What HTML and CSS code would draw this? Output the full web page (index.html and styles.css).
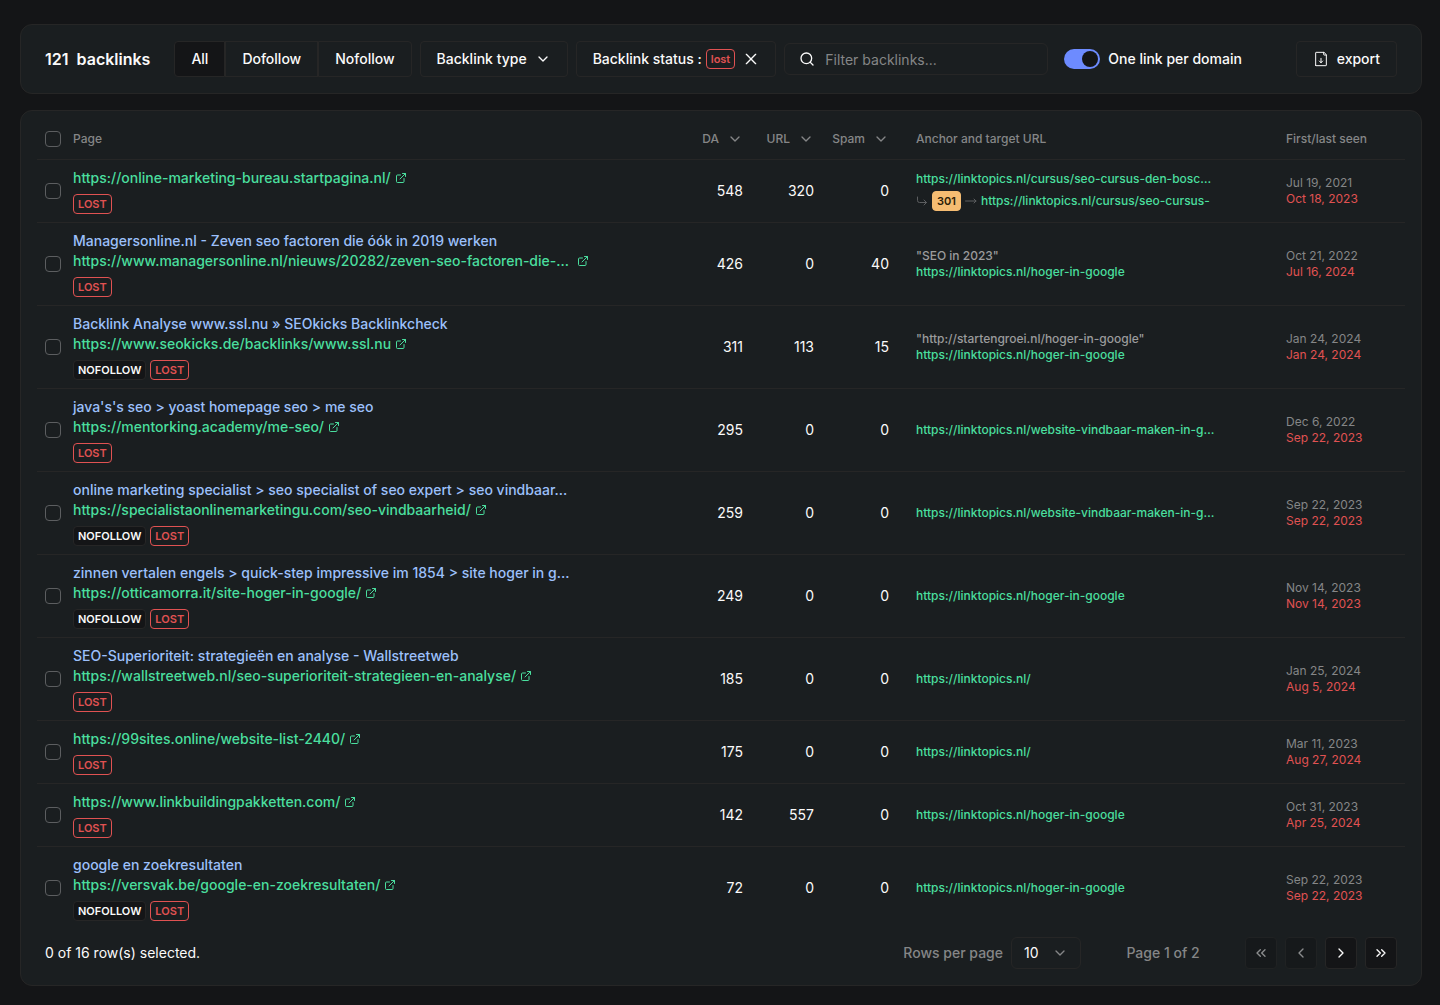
FILE: index.html
```html
<!DOCTYPE html>
<html lang="en">
<head>
  <meta charset="UTF-8">
  <meta name="viewport" content="width=device-width, initial-scale=1.0">
  <title>Backlinks</title>
  <link rel="stylesheet" href="styles.css">
</head>
<body>
  <!-- Icons -->
  <svg class="sprite" aria-hidden="true">
    <symbol id="chevron-down" viewBox="0 0 24 24"><path d="m6 9 6 6 6-6"/></symbol>
    <symbol id="close" viewBox="0 0 24 24"><path d="M19 5 5 19M5 5l14 14"/></symbol>
    <symbol id="search" viewBox="0 0 24 24"><circle cx="11" cy="11" r="8"/><path d="m21 21-4.300-4.300"/></symbol>
    <symbol id="file-down" viewBox="0 0 24 24"><path d="M4 21.400V2.600a.6.6 0 0 1 .6-.6h11.650a.6.6 0 0 1 .42.18l3.150 3.140a.6.6 0 0 1 .18.43V21.400a.6.6 0 0 1-.6.6H4.600a.6.6 0 0 1-.6-.6Z"/><path d="M16 2v3.400a.6.6 0 0 0 .6.6H20M12 11v6.500m0 0 2.500-2.500m-2.500 2.500-2.500-2.500"/></symbol>
    <symbol id="external" viewBox="0 0 24 24"><path d="M15 3h6v6M10 14 21 3"/><path d="M18 13v6a2 2 0 0 1-2 2H5a2 2 0 0 1-2-2V8a2 2 0 0 1 2-2h6"/></symbol>
    <symbol id="corner" viewBox="0 0 24 24"><path d="m16 10 5 5-5 5"/><path d="M3 4v7a4 4 0 0 0 4 4h14"/></symbol>
    <symbol id="arrow-right" viewBox="0 0 24 24"><path d="m18 8 4 4-4 4M1 12h21"/></symbol>
    <symbol id="chevron-left" viewBox="0 0 24 24"><path d="m15 6-6 6 6 6"/></symbol>
    <symbol id="chevron-right" viewBox="0 0 24 24"><path d="m9 6 6 6-6 6"/></symbol>
    <symbol id="chevrons-left" viewBox="0 0 24 24"><path d="m11 17-5-5 5-5M18 17l-5-5 5-5"/></symbol>
    <symbol id="chevrons-right" viewBox="0 0 24 24"><path d="m6 17 5-5-5-5M13 17l5-5-5-5"/></symbol>
  </svg>

  <header class="card toolbar">
    <h1>121&nbsp; backlinks</h1>
    <div class="toolbar-filters">
      <div class="btn-group">
        <button type="button" class="btn active">All</button>
        <button type="button" class="btn">Dofollow</button>
        <button type="button" class="btn">Nofollow</button>
      </div>
      <button type="button" class="btn">Backlink type <svg class="icon"><use href="#chevron-down"/></svg></button>
      <button type="button" class="btn"><span class="status">Backlink status : <span class="badge lost">lost</span></span> <svg class="icon"><use href="#close"/></svg></button>
      <div class="search">
        <svg class="icon"><use href="#search"/></svg>
        <input type="text" placeholder="Filter backlinks..." aria-label="Filter backlinks">
      </div>
    </div>
    <label class="switch"><input type="checkbox" checked> One link per domain</label>
    <button type="button" class="btn export"><svg class="icon"><use href="#file-down"/></svg> export</button>
  </header>

  <main class="card panel">
    <table>
      <colgroup>
        <col class="col-check">
        <col>
        <col class="col-num">
        <col class="col-num">
        <col class="col-spam">
        <col class="col-anchor">
        <col class="col-seen">
      </colgroup>
      <thead>
        <tr>
          <th><input type="checkbox" class="check" aria-label="Select all"></th>
          <th>Page</th>
          <th class="num"><button type="button" class="sort">DA <svg class="icon"><use href="#chevron-down"/></svg></button></th>
          <th class="num"><button type="button" class="sort">URL <svg class="icon"><use href="#chevron-down"/></svg></button></th>
          <th class="num"><button type="button" class="sort">Spam <svg class="icon"><use href="#chevron-down"/></svg></button></th>
          <th class="anchor">Anchor and target URL</th>
          <th>First/last seen</th>
        </tr>
      </thead>
      <tbody>
        <tr>
          <td><input type="checkbox" class="check" aria-label="Select row"></td>
          <td>
            <a href="#" class="url"><span>https://online-marketing-bureau.startpagina.nl/</span><svg class="icon-sm"><use href="#external"/></svg></a>
            <div class="badges"><span class="badge lost">LOST</span></div>
          </td>
          <td class="num">548</td>
          <td class="num">320</td>
          <td class="num">0</td>
          <td class="anchor">
            <a href="#" class="target">https://linktopics.nl/cursus/seo-cursus-den-bosc…</a>
            <div class="redirect">
              <svg class="icon-sm"><use href="#corner"/></svg>
              <span class="badge code">301</span>
              <svg class="icon-sm"><use href="#arrow-right"/></svg>
              <a href="#" class="target">https://linktopics.nl/cursus/seo-cursus-</a>
            </div>
          </td>
          <td class="seen">Jul 19, 2021<span class="last">Oct 18, 2023</span></td>
        </tr>
        <tr>
          <td><input type="checkbox" class="check" aria-label="Select row"></td>
          <td>
            <div class="title">Managersonline.nl - Zeven seo factoren die óók in 2019 werken</div>
            <a href="#" class="url cut"><span>https://www.managersonline.nl/nieuws/20282/zeven-seo-factoren-die-…</span><svg class="icon-sm"><use href="#external"/></svg></a>
            <div class="badges"><span class="badge lost">LOST</span></div>
          </td>
          <td class="num">426</td>
          <td class="num">0</td>
          <td class="num">40</td>
          <td class="anchor">
            <div class="anchor-text">"SEO in 2023"</div>
            <a href="#" class="target">https://linktopics.nl/hoger-in-google</a>
          </td>
          <td class="seen">Oct 21, 2022<span class="last">Jul 16, 2024</span></td>
        </tr>
        <tr>
          <td><input type="checkbox" class="check" aria-label="Select row"></td>
          <td>
            <div class="title">Backlink Analyse www.ssl.nu » SEOkicks Backlinkcheck</div>
            <a href="#" class="url"><span>https://www.seokicks.de/backlinks/www.ssl.nu</span><svg class="icon-sm"><use href="#external"/></svg></a>
            <div class="badges"><span class="badge">NOFOLLOW</span><span class="badge lost">LOST</span></div>
          </td>
          <td class="num">311</td>
          <td class="num">113</td>
          <td class="num">15</td>
          <td class="anchor">
            <div class="anchor-text">"http://startengroei.nl/hoger-in-google"</div>
            <a href="#" class="target">https://linktopics.nl/hoger-in-google</a>
          </td>
          <td class="seen">Jan 24, 2024<span class="last">Jan 24, 2024</span></td>
        </tr>
        <tr>
          <td><input type="checkbox" class="check" aria-label="Select row"></td>
          <td>
            <div class="title">java's's seo &gt; yoast homepage seo &gt; me seo</div>
            <a href="#" class="url"><span>https://mentorking.academy/me-seo/</span><svg class="icon-sm"><use href="#external"/></svg></a>
            <div class="badges"><span class="badge lost">LOST</span></div>
          </td>
          <td class="num">295</td>
          <td class="num">0</td>
          <td class="num">0</td>
          <td class="anchor"><a href="#" class="target">https://linktopics.nl/website-vindbaar-maken-in-g…</a></td>
          <td class="seen">Dec 6, 2022<span class="last">Sep 22, 2023</span></td>
        </tr>
        <tr>
          <td><input type="checkbox" class="check" aria-label="Select row"></td>
          <td>
            <div class="title">online marketing specialist &gt; seo specialist of seo expert &gt; seo vindbaar…</div>
            <a href="#" class="url"><span>https://specialistaonlinemarketingu.com/seo-vindbaarheid/</span><svg class="icon-sm"><use href="#external"/></svg></a>
            <div class="badges"><span class="badge">NOFOLLOW</span><span class="badge lost">LOST</span></div>
          </td>
          <td class="num">259</td>
          <td class="num">0</td>
          <td class="num">0</td>
          <td class="anchor"><a href="#" class="target">https://linktopics.nl/website-vindbaar-maken-in-g…</a></td>
          <td class="seen">Sep 22, 2023<span class="last">Sep 22, 2023</span></td>
        </tr>
        <tr>
          <td><input type="checkbox" class="check" aria-label="Select row"></td>
          <td>
            <div class="title">zinnen vertalen engels &gt; quick-step impressive im 1854 &gt; site hoger in g…</div>
            <a href="#" class="url"><span>https://otticamorra.it/site-hoger-in-google/</span><svg class="icon-sm"><use href="#external"/></svg></a>
            <div class="badges"><span class="badge">NOFOLLOW</span><span class="badge lost">LOST</span></div>
          </td>
          <td class="num">249</td>
          <td class="num">0</td>
          <td class="num">0</td>
          <td class="anchor"><a href="#" class="target">https://linktopics.nl/hoger-in-google</a></td>
          <td class="seen">Nov 14, 2023<span class="last">Nov 14, 2023</span></td>
        </tr>
        <tr>
          <td><input type="checkbox" class="check" aria-label="Select row"></td>
          <td>
            <div class="title">SEO-Superioriteit: strategieën en analyse - Wallstreetweb</div>
            <a href="#" class="url"><span>https://wallstreetweb.nl/seo-superioriteit-strategieen-en-analyse/</span><svg class="icon-sm"><use href="#external"/></svg></a>
            <div class="badges"><span class="badge lost">LOST</span></div>
          </td>
          <td class="num">185</td>
          <td class="num">0</td>
          <td class="num">0</td>
          <td class="anchor"><a href="#" class="target">https://linktopics.nl/</a></td>
          <td class="seen">Jan 25, 2024<span class="last">Aug 5, 2024</span></td>
        </tr>
        <tr>
          <td><input type="checkbox" class="check" aria-label="Select row"></td>
          <td>
            <a href="#" class="url"><span>https://99sites.online/website-list-2440/</span><svg class="icon-sm"><use href="#external"/></svg></a>
            <div class="badges"><span class="badge lost">LOST</span></div>
          </td>
          <td class="num">175</td>
          <td class="num">0</td>
          <td class="num">0</td>
          <td class="anchor"><a href="#" class="target">https://linktopics.nl/</a></td>
          <td class="seen">Mar 11, 2023<span class="last">Aug 27, 2024</span></td>
        </tr>
        <tr>
          <td><input type="checkbox" class="check" aria-label="Select row"></td>
          <td>
            <a href="#" class="url"><span>https://www.linkbuildingpakketten.com/</span><svg class="icon-sm"><use href="#external"/></svg></a>
            <div class="badges"><span class="badge lost">LOST</span></div>
          </td>
          <td class="num">142</td>
          <td class="num">557</td>
          <td class="num">0</td>
          <td class="anchor"><a href="#" class="target">https://linktopics.nl/hoger-in-google</a></td>
          <td class="seen">Oct 31, 2023<span class="last">Apr 25, 2024</span></td>
        </tr>
        <tr>
          <td><input type="checkbox" class="check" aria-label="Select row"></td>
          <td>
            <div class="title">google en zoekresultaten</div>
            <a href="#" class="url"><span>https://versvak.be/google-en-zoekresultaten/</span><svg class="icon-sm"><use href="#external"/></svg></a>
            <div class="badges"><span class="badge">NOFOLLOW</span><span class="badge lost">LOST</span></div>
          </td>
          <td class="num">72</td>
          <td class="num">0</td>
          <td class="num">0</td>
          <td class="anchor"><a href="#" class="target">https://linktopics.nl/hoger-in-google</a></td>
          <td class="seen">Sep 22, 2023<span class="last">Sep 22, 2023</span></td>
        </tr>
      </tbody>
    </table>

    <footer class="table-footer">
      <div class="selected">0 of 16 row(s) selected.</div>
      <div class="page-size">
        <label for="rows">Rows per page</label>
        <div class="select">
          <select id="rows">
            <option>10</option>
            <option>20</option>
            <option>50</option>
          </select>
          <svg class="icon"><use href="#chevron-down"/></svg>
        </div>
      </div>
      <div class="page-count">Page 1 of 2</div>
      <nav class="pager" aria-label="Pagination">
        <button type="button" disabled aria-label="First page"><svg class="icon"><use href="#chevrons-left"/></svg></button>
        <button type="button" disabled aria-label="Previous page"><svg class="icon"><use href="#chevron-left"/></svg></button>
        <button type="button" aria-label="Next page"><svg class="icon"><use href="#chevron-right"/></svg></button>
        <button type="button" aria-label="Last page"><svg class="icon"><use href="#chevrons-right"/></svg></button>
      </nav>
    </footer>
  </main>
</body>
</html>
```

FILE: styles.css
```css
:root {
  --bg: #141517;
  --card: #1a1e20;
  --border: #262626;
  --text: #fafafa;
  --muted: #858687;
  --green: #4ade9e;
  --blue: #9cc0fb;
  --red: #e05252;
}

* {
  box-sizing: border-box;
}

body {
  margin: 0;
  padding: 24px 18px 18px 20px;
  background: var(--bg);
  color: var(--text);
  font-family: Inter, "Liberation Sans", sans-serif;
  font-size: 14px;
  line-height: 20px;
}

button,
input,
select {
  font: inherit;
  color: inherit;
}

a {
  text-decoration: none;
}

.sprite {
  display: none;
}

.icon,
.icon-sm {
  flex: none;
  width: 16px;
  height: 16px;
  fill: none;
  stroke: currentColor;
  stroke-width: 2;
  stroke-linecap: round;
  stroke-linejoin: round;
}

.icon-sm {
  width: 12px;
  height: 12px;
}

.card {
  background: var(--card);
  border: 1px solid var(--border);
  border-radius: 12px;
}

/* Toolbar */
.toolbar {
  display: flex;
  align-items: center;
  gap: 16px;
  padding: 16px 24px;
  margin-bottom: 16px;
}

.toolbar h1 {
  margin: 0 8px 0 0;
  font-size: 16px;
  line-height: 24px;
  font-weight: 600;
  white-space: nowrap;
}

.toolbar-filters {
  display: flex;
  align-items: center;
  gap: 8px;
}

.btn {
  display: inline-flex;
  align-items: center;
  gap: 8px;
  height: 36px;
  padding: 0 16px;
  background: none;
  border: 1px solid var(--border);
  border-radius: 4px;
  font-weight: 500;
  white-space: nowrap;
  cursor: pointer;
}

.btn.active {
  background: var(--bg);
}

.btn-group {
  display: flex;
}

.btn-group .btn {
  border-radius: 0;
}

.btn-group .btn:first-child {
  border-radius: 4px 0 0 4px;
}

.btn-group .btn:last-child {
  border-radius: 0 4px 4px 0;
}

.status {
  display: flex;
  align-items: center;
  gap: 4px;
}

.search {
  display: flex;
  align-items: center;
  gap: 10px;
  width: 264px;
  height: 32px;
  padding: 0 14px;
  border: 1px solid var(--border);
  border-radius: 6px;
}

.search input {
  flex: 1;
  min-width: 0;
  padding: 2px 0 0;
  background: none;
  border: 0;
  outline: none;
}

.search input::placeholder {
  color: var(--muted);
  opacity: 1;
}

.switch {
  display: flex;
  align-items: center;
  gap: 8px;
  font-weight: 500;
  white-space: nowrap;
}

.switch input {
  appearance: none;
  display: flex;
  width: 36px;
  height: 20px;
  margin: 0;
  padding: 2px;
  border-radius: 10px;
  background: #3a3d40;
}

.switch input::before {
  content: "";
  width: 16px;
  height: 16px;
  border-radius: 50%;
  background: var(--bg);
}

.switch input:checked {
  justify-content: flex-end;
  background: #6d8bff;
}

.export {
  margin-left: auto;
}

.export .icon {
  stroke-width: 1.5;
}

/* Table */
.panel {
  padding: 8px 16px 16px;
}

table {
  width: 100%;
  table-layout: fixed;
  border-collapse: separate;
  border-spacing: 0;
}

.col-check { width: 28px; }
.col-num { width: 71px; }
.col-spam { width: 75px; }
.col-anchor { width: 381px; }
.col-seen { width: 127px; }

th,
td {
  padding: 8px;
  border-bottom: 1px solid var(--border);
  text-align: left;
  vertical-align: middle;
}

th {
  height: 41px;
  padding: 0 8px;
  color: var(--muted);
  font-size: 12px;
  font-weight: 500;
  white-space: nowrap;
}

tbody tr:last-child td {
  border-bottom: 0;
}

.num {
  text-align: right;
}

th.num {
  padding-left: 0;
}

.anchor {
  padding-left: 19px;
}

.sort {
  display: inline-flex;
  align-items: center;
  gap: 8px;
  padding: 0;
  background: none;
  border: 0;
  cursor: pointer;
}

.check {
  appearance: none;
  display: block;
  width: 16px;
  height: 16px;
  margin: 0;
  border: 1px solid #5c5e60;
  border-radius: 4px;
}

.title {
  color: var(--blue);
  font-weight: 500;
  white-space: nowrap;
}

.url {
  display: flex;
  align-items: center;
  gap: 4px;
  color: var(--green);
  font-weight: 500;
  white-space: nowrap;
}

.url.cut {
  gap: 8px;
}

.badges {
  display: flex;
  gap: 4px;
  margin-top: 6px;
}

.badge {
  height: 20px;
  padding: 0 4px;
  background: var(--bg);
  border: 1px solid var(--border);
  border-radius: 4px;
  font-size: 11px;
  line-height: 18px;
  font-weight: 600;
}

.badge.lost {
  background: none;
  border-color: var(--red);
  color: var(--red);
}

.badge.code {
  background: #f5bc72;
  border-color: #f5bc72;
  color: #2b1d08;
}

.anchor-text,
.target,
.seen {
  font-size: 12px;
  line-height: 16px;
}

.anchor-text {
  color: #9a9b9c;
  font-weight: 500;
}

.target {
  display: block;
  color: var(--green);
  font-weight: 500;
  white-space: nowrap;
}

.redirect {
  display: flex;
  align-items: center;
  gap: 4px;
  margin-top: 4px;
}

.redirect .icon-sm {
  color: #5c5e60;
}

.seen {
  color: var(--muted);
}

.last {
  display: block;
  color: var(--red);
}

/* Footer */
.table-footer {
  display: flex;
  align-items: center;
  gap: 32px;
  padding: 8px 8px 0;
}

.selected {
  flex: 1;
}

.page-size {
  display: flex;
  align-items: center;
  gap: 8px;
  color: var(--muted);
  font-weight: 500;
}

.select {
  display: grid;
  align-items: center;
  width: 70px;
  height: 32px;
}

.select select,
.select .icon {
  grid-area: 1 / 1;
}

.select select {
  appearance: none;
  width: 100%;
  height: 100%;
  padding: 0 12px;
  background: none;
  border: 1px solid var(--border);
  border-radius: 6px;
  color: var(--text);
  font-weight: 400;
}

.select .icon {
  justify-self: end;
  margin-right: 13px;
  pointer-events: none;
}

.page-count {
  width: 100px;
  color: var(--muted);
  font-weight: 500;
  text-align: center;
}

.pager {
  display: flex;
  gap: 8px;
}

.pager button {
  display: flex;
  align-items: center;
  justify-content: center;
  width: 32px;
  height: 32px;
  padding: 0;
  background: var(--bg);
  border: 1px solid var(--border);
  border-radius: 4px;
  cursor: pointer;
}

.pager button:disabled {
  opacity: 0.5;
}
```
